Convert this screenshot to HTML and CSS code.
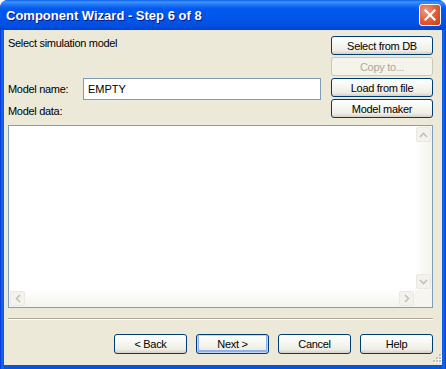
FILE: index.html
```html
<!DOCTYPE html>
<html lang="en">
<head>
  <meta charset="UTF-8" />
  <title>Component Wizard</title>
  <link rel="stylesheet" href="styles.css">
</head>
<body>

  <div class="window">
    <div class="titlebar">
      <span class="title">Component Wizard - Step 6 of 8</span>
      <button class="close" aria-label="Close">
        <svg width="12" height="12" viewBox="0 0 12 12">
          <path d="M1.5 1.5 L10.5 10.5 M10.5 1.5 L1.5 10.5" stroke="#fff" stroke-width="2.2" stroke-linecap="square" />
        </svg>
      </button>
    </div>

    <div class="client">
      <div class="top">
        <div class="fields">
          <p class="caption">Select simulation model</p>
          <div class="name-row">
            <label for="model-name">Model name:</label>
            <input type="text" id="model-name" value="EMPTY" />
          </div>
          <p class="caption data-label">Model data:</p>
        </div>
        <div class="side-buttons">
          <button class="btn">Select from DB</button>
          <button class="btn" disabled>Copy to...</button>
          <button class="btn">Load from file</button>
          <button class="btn">Model maker</button>
        </div>
      </div>

      <div class="data-box">
        <div class="data-area"></div>
        <div class="vscroll">
          <span class="arrow">
            <svg width="9" height="6" viewBox="0 0 9 6"><path d="M1 5 L4.5 1.5 L8 5" fill="none" stroke="#c3c1b5" stroke-width="1.6" /></svg>
          </span>
          <span class="track"></span>
          <span class="arrow">
            <svg width="9" height="6" viewBox="0 0 9 6"><path d="M1 1 L4.5 4.5 L8 1" fill="none" stroke="#c3c1b5" stroke-width="1.6" /></svg>
          </span>
        </div>
        <div class="hscroll">
          <span class="arrow">
            <svg width="6" height="9" viewBox="0 0 6 9"><path d="M5 1 L1.5 4.5 L5 8" fill="none" stroke="#c3c1b5" stroke-width="1.6" /></svg>
          </span>
          <span class="track"></span>
          <span class="arrow">
            <svg width="6" height="9" viewBox="0 0 6 9"><path d="M1 1 L4.5 4.5 L1 8" fill="none" stroke="#c3c1b5" stroke-width="1.6" /></svg>
          </span>
        </div>
        <div class="corner"></div>
      </div>

      <div class="separator"></div>

      <div class="nav">
        <button class="btn">&lt; Back</button>
        <button class="btn default">Next &gt;</button>
        <button class="btn">Cancel</button>
        <button class="btn">Help</button>
      </div>

      <svg class="grip" width="12" height="12" viewBox="0 0 12 12">
        <g fill="#fff">
          <rect x="10" y="2" width="2" height="2" />
          <rect x="7" y="5" width="2" height="2" /><rect x="10" y="5" width="2" height="2" />
          <rect x="4" y="8" width="2" height="2" /><rect x="7" y="8" width="2" height="2" /><rect x="10" y="8" width="2" height="2" />
        </g>
        <g fill="#c2bfb1">
          <rect x="9" y="1" width="2" height="2" />
          <rect x="6" y="4" width="2" height="2" /><rect x="9" y="4" width="2" height="2" />
          <rect x="3" y="7" width="2" height="2" /><rect x="6" y="7" width="2" height="2" /><rect x="9" y="7" width="2" height="2" />
        </g>
      </svg>
    </div>
  </div>

</body>
</html>
```

FILE: styles.css
```css
* {
  box-sizing: border-box;
}

body {
  margin: 0;
  font-family: 'Liberation Sans', Arial, sans-serif;
  font-size: 11px;
  color: #000;
  background: #fff;
}

.window {
  width: 446px;
  height: 369px;
  display: flex;
  flex-direction: column;
  background: linear-gradient(to right, #0831d9 0, #166aee 2px, #0855dd 4px, #0855dd 442px, #166aee 444px, #0831d9 446px);
  border-radius: 8px 8px 0 0;
  overflow: hidden;
}

.titlebar {
  height: 30px;
  display: flex;
  align-items: center;
  justify-content: space-between;
  padding: 0 5px 0 6px;
  background: linear-gradient(to bottom, #0a5fe8 0, #3d95ff 2px, #1f73f4 5px, #0058ee 9px, #0056ea 60%, #004ee0 88%, #0043cf 100%);
}

.title {
  font-weight: bold;
  font-size: 13px;
  color: #fff;
  text-shadow: 1px 1px 0 #0a1883;
  padding-top: 1px;
}

.close {
  width: 22px;
  height: 22px;
  padding: 0;
  border: 1px solid #fff;
  border-radius: 3px;
  background: radial-gradient(circle at 30% 30%, #f09a80 0, #e2623f 45%, #c83c14 100%);
  display: flex;
  align-items: center;
  justify-content: center;
}

.client {
  position: relative;
  flex: 1;
  margin: 0 4px 4px 4px;
  padding: 6px 9px 0 4px;
  background: #ece9d8;
}

.top {
  display: flex;
  gap: 10px;
}

.fields {
  flex: 1;
}

.caption {
  margin: 0;
  line-height: 14px;
  letter-spacing: -0.3px;
}

.name-row {
  display: flex;
  align-items: center;
  margin-top: 28px;
}

.name-row label {
  width: 75px;
  letter-spacing: -0.3px;
}

.name-row input {
  flex: 1;
  min-width: 0;
  height: 22px;
  padding: 0 4px;
  border: 1px solid #7f9db9;
  font-family: inherit;
  font-size: 11px;
  background: #fff;
  outline: none;
}

.data-label {
  margin-top: 4px;
}

.side-buttons {
  width: 102px;
  display: flex;
  flex-direction: column;
  gap: 2px;
}

.btn {
  height: 19px;
  padding: 0;
  border: 1px solid #003c74;
  border-radius: 3px;
  background: linear-gradient(to bottom, #fff 0, #f7f7f3 40%, #eeede5 80%, #d6d0c5 100%);
  font-family: inherit;
  font-size: 11px;
  letter-spacing: -0.3px;
  color: #000;
}

.btn:disabled {
  border-color: #c9c7ba;
  background: #f5f4ea;
  color: #aca899;
}

.btn.default {
  box-shadow: inset 0 0 0 1px #c2d6f6, inset 0 -1px 0 2px #8fb0ec;
}

.data-box {
  margin-top: 7px;
  height: 183px;
  border: 1px solid #7f9db9;
  background: #fff;
  display: grid;
  grid-template-columns: 1fr 17px;
  grid-template-rows: 1fr 17px;
}

.data-area {
  background: #fff;
}

.vscroll,
.hscroll {
  display: flex;
  background: linear-gradient(to right, #fff, #f4f3ee);
}

.vscroll {
  flex-direction: column;
}

.hscroll {
  background: linear-gradient(to bottom, #fff, #f4f3ee);
}

.track {
  flex: 1;
}

.arrow {
  width: 17px;
  height: 17px;
  display: flex;
  align-items: center;
  justify-content: center;
  border: 1px solid #e9e8e1;
  border-radius: 2px;
  background: #f3f2ec;
  margin: 1px;
  width: 15px;
  height: 15px;
}

.corner {
  background: #f6f5f0;
}

.separator {
  margin-top: 10px;
  height: 2px;
  border-top: 1px solid #aca899;
  border-bottom: 1px solid #fff;
}

.nav {
  display: flex;
  justify-content: flex-end;
  gap: 9px;
  margin-top: 14px;
}

.nav .btn {
  width: 73px;
  height: 20px;
}

.grip {
  position: absolute;
  right: 0;
  bottom: 0;
}
```
